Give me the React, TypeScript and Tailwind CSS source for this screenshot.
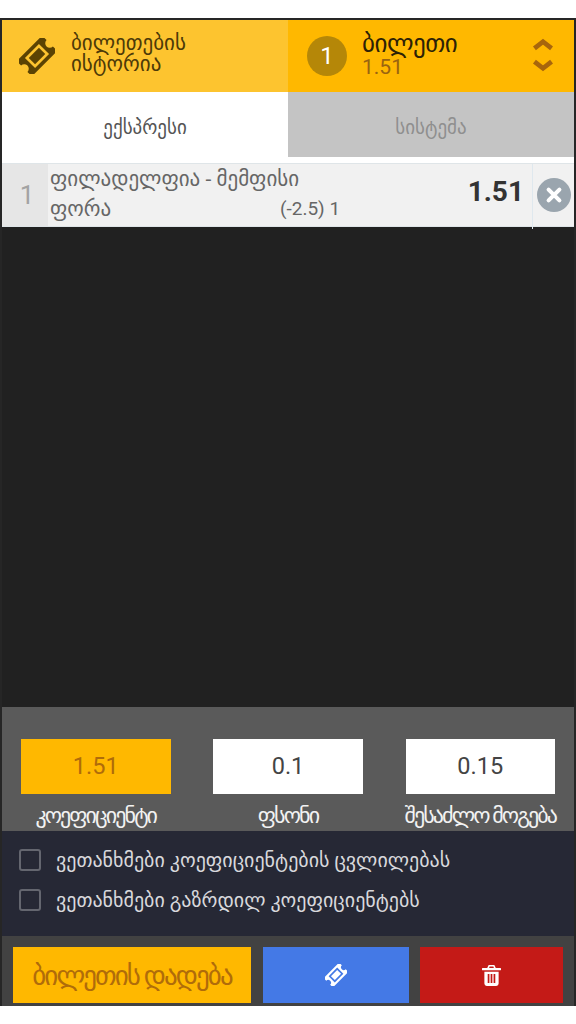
const FONT = "font-['Roboto','DejaVu_Sans',sans-serif]";

function Ticket({ className, fill, hole }: { className: string; fill: string; hole: string }) {
  return (
    <svg viewBox="0 0 40 40" className={className}>
      <g transform="rotate(-45 20 20)">
        <path fill={fill} d="M0 8h40v7a5 5 0 0 0 0 10v7H0v-7a5 5 0 0 0 0-10z" />
        <rect x="9" y="12" width="22" height="16" fill={hole} />
        <rect x="12" y="15" width="16" height="10" fill={fill} />
      </g>
    </svg>
  );
}

function Stake({ value, label, active }: { value: string; label: string; active?: boolean }) {
  return (
    <div className="flex w-[149.5px] flex-col items-center">
      <div
        className={`flex h-[55px] w-full items-center justify-center text-[23.5px] ${
          active ? "bg-[#ffb800] text-[#b06c0a]" : "bg-white text-[#444]"
        }`}
      >
        {value}
      </div>
      <span className="mt-[9px] whitespace-nowrap text-[22px] leading-[26px] tracking-[-1.9px] text-[#f2f2f2]">
        {label}
      </span>
    </div>
  );
}

function Agree({ text }: { text: string }) {
  return (
    <div className="flex h-[40px] items-center">
      <span className="h-[22px] w-[22px] rounded-[3px] border-2 border-[#64666f]" />
      <span className="ml-[15px] whitespace-nowrap text-[20px] text-[#d8d8dc]">{text}</span>
    </div>
  );
}

export default function App() {
  return (
    <div className={`h-[1024px] w-[576px] bg-white pt-[18px] ${FONT}`}>
      <div className="flex h-[988px] flex-col border-x-2 border-t-2 border-[#262626] bg-[#212121]">
        <div className="flex h-[72px]">
          <div className="flex w-[286px] items-center bg-[#fdc42f] pl-[17px]">
            <Ticket className="h-[36px] w-[36px]" fill="#5b4303" hole="#fdc42f" />
            <div className="ml-[16px] -translate-y-[2px] text-[21px] leading-[21px] text-[#4d3a08]">
              ბილეთების
              <br />
              ისტორია
            </div>
          </div>
          <div className="flex flex-1 items-center bg-[#ffb800] pl-[19px]">
            <span className="flex h-[40px] w-[40px] items-center justify-center rounded-full bg-[#b58708] text-[24px] text-white">
              1
            </span>
            <div className="ml-[15px] flex-1 -translate-y-[1px]">
              <div className="text-[25px] leading-[23px] tracking-[-0.5px] text-[#2d2206]">ბილეთი</div>
              <div className="text-[21px] leading-[24px] text-[#9a6410]">1.51</div>
            </div>
            <svg viewBox="0 0 24 40" className="mr-[19px] h-[38px] w-[24px]" fill="none" stroke="#a8660c" strokeWidth="5">
              <path d="M3 12l9-7 9 7M3 26l9 7 9-7" />
            </svg>
          </div>
        </div>

        <div className="flex h-[65px] text-[19px]">
          <div className="flex w-[286px] items-center justify-center bg-white pt-[7px] text-[#555]">ექსპრესი</div>
          <div className="flex flex-1 items-center justify-center bg-[#c4c4c4] pt-[7px] text-[#8f8f8f]">სისტემა</div>
        </div>

        <div className="h-[6px] bg-white" />

        <div className="flex h-[64px] border-y border-[#dfe5e8] bg-[#f1f1f1]">
          <div className="flex w-[46px] items-center justify-center bg-[#e6e6e6] pl-[4px] text-[26px] text-[#a3a3a3]">
            1
          </div>
          <div className="flex w-[484px] -translate-y-[1px] flex-col justify-center pl-[2px] pr-[8px] text-[21px] leading-[30px] text-[#666]">
            <div className="whitespace-nowrap">ფილადელფია - მემფისი</div>
            <div className="flex items-start justify-between">
              <div className="flex">
                <span className="w-[230px]">ფორა</span>
                <span className="text-[19px]">(-2.5) 1</span>
              </div>
              <span className="-mt-[18px] text-[28px] font-bold leading-[32px] text-[#333]">1.51</span>
            </div>
          </div>
          <div className="z-10 -mb-[3px] flex flex-1 items-center justify-center border-l border-[#dfe8ee] pb-[3px]">
            <span className="flex h-[34px] w-[34px] items-center justify-center rounded-full bg-[#9aa5ae]">
              <svg viewBox="0 0 20 20" className="h-[18px] w-[18px]" stroke="white" strokeWidth="4.5" strokeLinecap="round">
                <path d="M4 4l12 12M16 4L4 16" />
              </svg>
            </span>
          </div>
        </div>

        <div className="flex-1" />

        <div className="flex h-[124px] justify-between bg-[#5a5a5a] pl-[19px] pr-[19px] pt-[32px]">
          <Stake value="1.51" label="კოეფიციენტი" active />
          <Stake value="0.1" label="ფსონი" />
          <Stake value="0.15" label="შესაძლო მოგება" />
        </div>

        <div className="flex h-[105px] flex-col bg-[#262835] pl-[17px] pt-[9px]">
          <Agree text="ვეთანხმები კოეფიციენტების ცვლილებას" />
          <Agree text="ვეთანხმები გაზრდილ კოეფიციენტებს" />
        </div>

        <div className="flex h-[70px] gap-[11px] bg-[#424242] pl-[11px] pr-[11px] pt-[11px]">
          <div className="mr-[1px] flex h-[56px] w-[238px] items-center justify-center bg-[#ffb800] pt-[2px] text-[27px] tracking-[-1.9px] text-[#b06c0a]">
            ბილეთის დადება
          </div>
          <div className="flex h-[56px] w-[146px] items-center justify-center bg-[#4479e6]">
            <Ticket className="h-[22px] w-[22px]" fill="white" hole="#4479e6" />
          </div>
          <div className="flex h-[56px] flex-1 items-center justify-center bg-[#c41a17]">
            <svg viewBox="0 0 20 22" className="h-[21px] w-[19px]" fill="white">
              <path
                fillRule="evenodd"
                d="M7 0h6l1.500 3H19a1 1 0 0 1 0 2.500H1A1 1 0 0 1 1 3h4.500zM8 1.500L7.500 3h5L12 1.500zM2.500 7h15v12.500a2.500 2.500 0 0 1-2.500 2.500H5a2.500 2.500 0 0 1-2.500-2.500zM6 9.500v9.500h1.800V9.500zm3.100 0v9.500h1.800V9.500zm3.100 0v9.500H14V9.500z"
              />
            </svg>
          </div>
        </div>
      </div>
    </div>
  );
}
